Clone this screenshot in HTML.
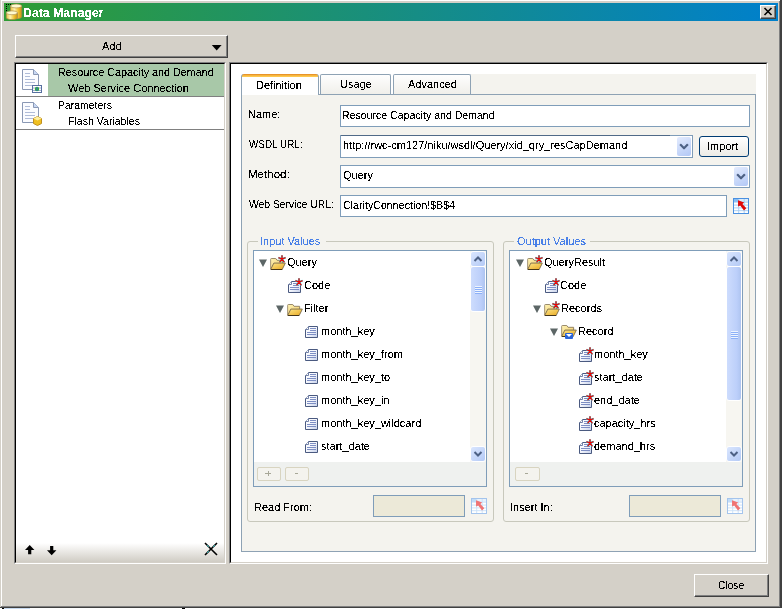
<!DOCTYPE html>
<html><head><meta charset="utf-8">
<style>
*{box-sizing:border-box}
html,body{margin:0;padding:0}
body{width:782px;height:609px;overflow:hidden;background:#d4d0c8;position:relative;font-family:"Liberation Sans",sans-serif;font-size:11px;color:#000}
.a{position:absolute}
.t{position:absolute;white-space:pre;line-height:13px;filter:url(#crisp)}
svg.i{position:absolute;overflow:visible}
.btn3d{position:absolute;background:#d4d0c8;border-top:1px solid #fff;border-left:1px solid #fff;border-right:1px solid #404040;border-bottom:1px solid #404040;box-shadow:inset -1px -1px 0 #808080}
.sunk{position:absolute;border-top:1px solid #808080;border-left:1px solid #808080;border-right:1px solid #fff;border-bottom:1px solid #fff}
.fld{position:absolute;background:#fff;border:1px solid #7f9db9}
.sbtn{position:absolute;width:15px;height:14px;border-radius:3px;border:1px solid #fff;background:linear-gradient(135deg,#dae6fe,#b4caf6)}
</style></head><body>
<svg width="0" height="0" style="position:absolute">
<defs>
<filter id="crisp" x="-5%" y="-5%" width="110%" height="110%"><feComponentTransfer><feFuncA type="discrete" tableValues="0 0 0 0 0 0 0 0 0 1 1 1 1 1 1 1 1 1 1 1"/></feComponentTransfer></filter>
<linearGradient id="gold" x1="0" x2="1" y1="0" y2="0"><stop offset="0" stop-color="#e8c040"/><stop offset="0.35" stop-color="#fff4b0"/><stop offset="0.7" stop-color="#f0c030"/><stop offset="1" stop-color="#c89010"/></linearGradient>
<linearGradient id="fback" x1="0" x2="1" y1="0" y2="1"><stop offset="0" stop-color="#fff4b8"/><stop offset="1" stop-color="#f0c860"/></linearGradient>
<linearGradient id="ffront" x1="0" x2="1" y1="0" y2="1"><stop offset="0" stop-color="#fde68a"/><stop offset="1" stop-color="#e8a820"/></linearGradient>
<linearGradient id="dfill" x1="0" x2="1" y1="0" y2="1"><stop offset="0" stop-color="#ffffff"/><stop offset="0.5" stop-color="#f4f6fc"/><stop offset="1" stop-color="#c4cfea"/></linearGradient>
<symbol id="star" viewBox="0 0 8 8">
 <path d="M4,4V0.3M4,4L0.4,2.6M4,4L7.6,2.6M4,4L1.6,7.4M4,4L6.4,7.4" stroke="#30e4ec" stroke-width="1.9"/>
 <path d="M4,4V0.3M4,4L0.4,2.6M4,4L7.6,2.6M4,4L1.6,7.4M4,4L6.4,7.4" stroke="#f00000" stroke-width="1.3"/>
</symbol>
<symbol id="folder" viewBox="0 0 17 13">
 <path d="M0.5,12 V1.5 Q0.5,0.5 1.5,0.5 H6 L7.5,2.5 H13.5 V6" fill="url(#fback)" stroke="#8c7c5c"/>
 <path d="M0.5,12.5 L4,5.5 H16.5 L13,12.5 Z" fill="url(#ffront)" stroke="#7c6c4c"/>
 <path d="M1,12.5 H13" stroke="#3c2c10"/>
</symbol>
<symbol id="doc" viewBox="0 0 13 12">
 <path d="M3.5,0.5 H12.5 V11.5 H0.5 V3.5 Z" fill="url(#dfill)" stroke="#4a5a80"/>
 <path d="M0.5,3.5 H3.5 V0.5" fill="#fff" stroke="#7080a8"/>
 <path d="M5,2.5H11M5,4.5H11M2,6.5H11M2,8.5H11" stroke="#7d8ec4"/>
</symbol>
<symbol id="tri" viewBox="0 0 8 8">
 <path d="M0,0.5 H8 L4,8 Z" fill="#5c6666"/>
</symbol>
<symbol id="bigdoc" viewBox="0 0 17 21">
 <path d="M0.5,0.5 H11.5 L16.5,5.5 V20.5 H0.5 Z" fill="#fbfcff" stroke="#8a98b4"/>
 <path d="M11.5,0.5 V5.5 H16.5" fill="#c8d8f4" stroke="#8a98b4"/>
 <path d="M3,4.5H8M3,7.5H8M3,10.5H13M3,13.5H13M3,16.5H13" stroke="#b0bcd8"/>
</symbol>
<symbol id="pick" viewBox="0 0 16 16">
 <rect x="0.5" y="0.5" width="15" height="15" fill="#fff" stroke="#4a90e0"/>
 <rect x="1" y="1" width="4.5" height="3" fill="#88bcf4"/>
 <rect x="6" y="1" width="9" height="3" fill="#dcecfc"/>
 <path d="M1,4.2H15M1,7.1H15M1,9.9H15M1,12.7H15M5.7,1V15M11.2,1V15" stroke="#a4ccf4" stroke-width="0.9"/>
 <path d="M5,2.3 L11.2,4.5 L9.4,6 L13.3,10.2 L11,12.4 L7.2,7.6 L5.1,8.6 Z" fill="#e00808"/>
</symbol>
<symbol id="pickd" viewBox="0 0 16 16">
 <rect x="0.5" y="0.5" width="15" height="15" fill="#fff" stroke="#a4c4ec"/>
 <rect x="1" y="1" width="4.5" height="3" fill="#c0dcf8"/>
 <rect x="6" y="1" width="9" height="3" fill="#e8f2fc"/>
 <path d="M1,4.2H15M1,7.1H15M1,9.9H15M1,12.7H15M5.7,1V15M11.2,1V15" stroke="#c8e0f8" stroke-width="0.9"/>
 <path d="M5,2.3 L11.2,4.5 L9.4,6 L13.3,10.2 L11,12.4 L7.2,7.6 L5.1,8.6 Z" fill="#f07474"/>
</symbol>
<symbol id="chev" viewBox="0 0 9 6">
 <path d="M1,1 L4.5,4.5 L8,1" fill="none" stroke="#4d6185" stroke-width="2"/>
</symbol>
<symbol id="chevu" viewBox="0 0 9 6">
 <path d="M1,5 L4.5,1.5 L8,5" fill="none" stroke="#4d6185" stroke-width="2"/>
</symbol>
</defs></svg>

<div class="a" style="left:1px;top:0;width:779px;height:1px;background:#fff"></div>
<div class="a" style="left:1px;top:0;width:1px;height:606px;background:#fff"></div>
<div class="a" style="left:779px;top:1px;width:1px;height:606px;background:#808080"></div>
<div class="a" style="left:780px;top:0;width:2px;height:609px;background:#404040"></div>
<div class="a" style="left:1px;top:606px;width:779px;height:1px;background:#808080"></div>
<div class="a" style="left:0;top:607px;width:782px;height:1px;background:#404040"></div>
<div class="a" style="left:0;top:608px;width:782px;height:1px;background:#fff"></div>
<div class="a" style="left:2px;top:608px;width:2px;height:1px;background:#000"></div>
<div class="a" style="left:4px;top:608px;width:26px;height:1px;background:#c8daf0"></div>
<div class="a" style="left:182px;top:608px;width:3px;height:1px;background:#000"></div>

<div class="a" style="left:4px;top:3px;width:774px;height:18px;background:linear-gradient(to right,#2f9c34,#0080cc)"></div>
<svg class="i" style="left:0;top:0" width="23" height="23" viewBox="0 0 23 23">
 <rect x="6" y="4" width="1" height="1" fill="#000"/><rect x="8" y="4" width="1" height="1" fill="#000"/><rect x="10" y="4" width="1" height="1" fill="#000"/>
 <rect x="6" y="6" width="1" height="1" fill="#000"/><rect x="6" y="8" width="1" height="1" fill="#000"/><rect x="6" y="10" width="1" height="1" fill="#000"/>
 <path d="M10.5,6 V16.8 A5.6,1.9 0 0 0 21.7,16.8 V6" fill="url(#gold)" stroke="#a88848" stroke-width="0.7"/>
 <ellipse cx="16.1" cy="6" rx="5.6" ry="1.9" fill="#fffad0" stroke="#b09050" stroke-width="0.7"/>
 <path d="M6.3,12.8 V17.7 A5.6,1.9 0 0 0 17.5,17.7 V12.8" fill="url(#gold)" stroke="#a88848" stroke-width="0.7"/>
 <ellipse cx="11.9" cy="12.8" rx="5.6" ry="1.9" fill="#fffad0" stroke="#b09050" stroke-width="0.7"/>
</svg>
<div class="t" style="left:23px;top:6px;color:#fff;font-weight:bold;font-size:12px;line-height:14px;transform:scaleX(1.025);transform-origin:0 0">Data Manager</div>
<div class="btn3d" style="left:760px;top:5px;width:16px;height:14px"></div>
<svg class="i" style="left:764px;top:8px" width="8" height="7" viewBox="0 0 8 7"><path d="M0.5,0 L7.5,7 M7.5,0 L0.5,7" stroke="#000" stroke-width="1.6"/></svg>

<div class="btn3d" style="left:15px;top:35px;width:213px;height:23px"></div>
<div class="t" style="left:102px;top:40px">Add</div>
<svg class="i" style="left:212px;top:45px" width="10" height="6" viewBox="0 0 10 6"><path d="M-0.2,0H9.6L4.7,5.4Z" fill="#000"/></svg>

<div class="sunk" style="left:14px;top:62px;width:212px;height:502px"></div>
<div class="a" style="left:15px;top:63px;width:210px;height:500px;background:#fff;border-top:1px solid #000;border-left:1px solid #000;border-right:1px solid #d4d0c8;border-bottom:1px solid #d4d0c8"></div>
<div class="a" style="left:16px;top:543px;width:208px;height:19px;background:linear-gradient(#fff,#d0ccc4)"></div>
<div class="a" style="left:48px;top:64px;width:176px;height:32px;background:#a8c8a8"></div>
<div class="a" style="left:16px;top:96px;width:208px;height:1px;background:#808080"></div>
<div class="a" style="left:16px;top:129px;width:208px;height:1px;background:#808080"></div>
<svg class="i" style="left:22px;top:69px" width="17" height="21"><use href="#bigdoc"/></svg>
<svg class="i" style="left:32px;top:85px" width="10" height="8" viewBox="0 0 10 8"><rect x="0.5" y="0.5" width="9" height="7" fill="#fff" stroke="#5870a0"/><path d="M1,3H9M1,5.5H9" stroke="#a0b0d0"/><circle cx="5" cy="4" r="2.2" fill="#30b030"/><path d="M5,2V6" stroke="#3060e0"/></svg>
<svg class="i" style="left:22px;top:102px" width="17" height="21"><use href="#bigdoc"/></svg>
<svg class="i" style="left:33px;top:116px" width="9" height="10" viewBox="0 0 9 10"><path d="M4.5,0.5 L8.5,2.5 V7.5 L4.5,9.5 L0.5,7.5 V2.5 Z" fill="#f0c020" stroke="#c09020"/><path d="M0.5,2.5 L4.5,4.5 L8.5,2.5 L4.5,0.5Z" fill="#fff0a0"/></svg>
<div class="t" style="left:58px;top:66px;transform:scaleX(0.98);transform-origin:0 0">Resource Capacity and Demand</div>
<div class="t" style="left:68px;top:82px">Web Service Connection</div>
<div class="t" style="left:58px;top:99px;transform:scaleX(0.95);transform-origin:0 0">Parameters</div>
<div class="t" style="left:68px;top:115px;transform:scaleX(0.96);transform-origin:0 0">Flash Variables</div>
<svg class="i" style="left:25px;top:545px" width="10" height="10" viewBox="0 0 10 10"><path d="M4.7,0 L9.4,5 H6.3 V9.3 H3.1 V5 H0 Z" fill="#000"/></svg>
<svg class="i" style="left:47px;top:546px" width="10" height="10" viewBox="0 0 10 10"><path d="M4.7,9.3 L9.4,4.3 H6.3 V0 H3.1 V4.3 H0 Z" fill="#000"/></svg>
<svg class="i" style="left:204px;top:542px" width="14" height="14" viewBox="0 0 14 14"><path d="M1,1 L13,13 M13,1 L1,13" stroke="#000" stroke-width="1.6"/><path d="M3,3L5,5M11,3L9,5M3,11L5,9" stroke="#20a0a0" stroke-width="1"/></svg>

<div class="sunk" style="left:229px;top:62px;width:539px;height:502px"></div>
<div class="a" style="left:230px;top:63px;width:537px;height:500px;background:#fff;border-top:1px solid #000;border-left:1px solid #000;border-right:1px solid #d4d0c8;border-bottom:1px solid #d4d0c8"></div>

<div class="a" style="left:471px;top:74px;width:285px;height:20px;background:#f4f3ee"></div>
<div class="a" style="left:241px;top:94px;width:515px;height:458px;background:#f4f3ee;border:1px solid #8ea2b4"></div>
<div class="a" style="left:241px;top:74px;width:78px;height:21px;background:linear-gradient(#e8942a 0 1px,#f6b63e 1px 2px,#fdc850 2px 3px,#fff 3px);border-left:1px solid #8ea2b4;border-right:1px solid #8ea2b4;border-radius:3px 3px 0 0"></div>
<div class="a" style="left:320px;top:74px;width:71px;height:20px;background:linear-gradient(#fefefe,#f0efea);border:1px solid #8ea2b4;border-bottom:none;border-radius:2px 2px 0 0"></div>
<div class="a" style="left:393px;top:74px;width:78px;height:20px;background:linear-gradient(#fefefe,#f0efea);border:1px solid #8ea2b4;border-bottom:none;border-radius:2px 2px 0 0"></div>
<div class="t" style="left:256px;top:79px">Definition</div>
<div class="t" style="left:340px;top:78px">Usage</div>
<div class="t" style="left:408px;top:78px">Advanced</div>

<div class="t" style="left:248px;top:108px">Name:</div>
<div class="t" style="left:249px;top:138px;transform:scaleX(0.9);transform-origin:0 0">WSDL URL:</div>
<div class="t" style="left:248px;top:168px;transform:scaleX(1.05);transform-origin:0 0">Method:</div>
<div class="t" style="left:249px;top:198px;transform:scaleX(0.94);transform-origin:0 0">Web Service URL:</div>
<div class="fld" style="left:340px;top:105px;width:410px;height:22px"></div>
<div class="t" style="left:342px;top:109px;transform:scaleX(0.96);transform-origin:0 0">Resource Capacity and Demand</div>
<div class="fld" style="left:340px;top:135px;width:353px;height:23px"></div>
<div class="t" style="left:343px;top:139px">http://rwc-cm127/niku/wsdl/Query/xid_qry_resCapDemand</div>
<div class="sbtn" style="left:677px;top:137px;width:14px;height:19px;border:none;border-radius:2px;background:linear-gradient(150deg,#e4ecfe,#b2c8f6)"></div>
<svg class="i" style="left:679px;top:143px" width="10" height="7" viewBox="0 0 9 6"><use href="#chev"/></svg>
<div class="a" style="left:341px;top:135px;width:329px;height:1px;background:#506a88"></div>
<div class="a" style="left:699px;top:136px;width:50px;height:21px;background:linear-gradient(#fff,#ecebe6);border:1px solid #003c74;border-radius:3px"></div>
<div class="t" style="left:707px;top:140px">Import</div>
<div class="fld" style="left:340px;top:165px;width:410px;height:23px"></div>
<div class="t" style="left:343px;top:169px">Query</div>
<div class="sbtn" style="left:734px;top:167px;width:14px;height:19px;border:none;border-radius:2px;background:linear-gradient(150deg,#e4ecfe,#b2c8f6)"></div>
<svg class="i" style="left:736px;top:173px" width="10" height="7" viewBox="0 0 9 6"><use href="#chev"/></svg>
<div class="fld" style="left:340px;top:195px;width:387px;height:22px"></div>
<div class="t" style="left:343px;top:199px;transform:scaleX(0.97);transform-origin:0 0">ClarityConnection!$B$4</div>
<svg class="i" style="left:733px;top:198px" width="16" height="16"><use href="#pick"/></svg>

<div class="a" style="left:247px;top:241px;width:247px;height:281px;border:1px solid #c8c8bc;border-radius:3px"></div>
<div class="a" style="left:258px;top:234px;width:68px;height:14px;background:#f4f3ee"></div>
<div class="t" style="left:260px;top:235px;color:#4a80e8">Input Values</div>
<div class="fld" style="left:253px;top:250px;width:234px;height:237px;background:#eff1ef"></div>
<div class="a" style="left:254px;top:251px;width:232px;height:211px;background:#fff;overflow:hidden">
<svg class="i" style="left:5px;top:8px" width="8" height="8"><use href="#tri"/></svg>
<svg class="i" style="left:16px;top:7px" width="16" height="12" viewBox="0 0 17 13"><use href="#folder"/></svg>
<svg class="i" style="left:24px;top:4px" width="8" height="8"><use href="#star"/></svg>
<div class="t" style="left:33px;top:5px">Query</div>
<svg class="i" style="left:34px;top:30px" width="13" height="12"><use href="#doc"/></svg>
<svg class="i" style="left:41px;top:27px" width="8" height="8"><use href="#star"/></svg>
<div class="t" style="left:50px;top:28px">Code</div>
<svg class="i" style="left:22px;top:54px" width="8" height="8"><use href="#tri"/></svg>
<svg class="i" style="left:33px;top:53px" width="16" height="12" viewBox="0 0 17 13"><use href="#folder"/></svg>
<div class="t" style="left:50px;top:51px">Filter</div>
<svg class="i" style="left:51px;top:75px" width="13" height="12"><use href="#doc"/></svg>
<div class="t" style="left:67px;top:74px">month_key</div>
<svg class="i" style="left:51px;top:98px" width="13" height="12"><use href="#doc"/></svg>
<div class="t" style="left:67px;top:97px">month_key_from</div>
<svg class="i" style="left:51px;top:121px" width="13" height="12"><use href="#doc"/></svg>
<div class="t" style="left:67px;top:120px">month_key_to</div>
<svg class="i" style="left:51px;top:144px" width="13" height="12"><use href="#doc"/></svg>
<div class="t" style="left:67px;top:143px">month_key_in</div>
<svg class="i" style="left:51px;top:167px" width="13" height="12"><use href="#doc"/></svg>
<div class="t" style="left:67px;top:166px">month_key_wildcard</div>
<svg class="i" style="left:51px;top:190px" width="13" height="12"><use href="#doc"/></svg>
<div class="t" style="left:67px;top:189px">start_date</div>
</div>
<div class="a" style="left:470px;top:251px;width:16px;height:211px;background:#f7f6f1"></div>
<div class="sbtn" style="left:470px;top:251px;width:16px;height:16px"></div>
<svg class="i" style="left:473px;top:256px" width="10" height="6" viewBox="0 0 9 6"><use href="#chevu"/></svg>
<div class="sbtn" style="left:470px;top:266px;width:16px;height:46px;background:linear-gradient(to right,#cddcfd,#bccffa 70%,#aec4f0)"></div>
<div class="a" style="left:475px;top:286px;width:7px;height:8px;background:repeating-linear-gradient(#eef4fe 0 1px,#8cb0f8 1px 2px)"></div>
<div class="sbtn" style="left:470px;top:446px;width:16px;height:16px"></div>
<svg class="i" style="left:473px;top:451px" width="10" height="6" viewBox="0 0 9 6"><use href="#chev"/></svg>

<div class="a" style="left:257px;top:467px;width:24px;height:14px;border:1px solid #d8d4c0;border-radius:2px;background:#f4f3ee"></div>
<div class="t" style="left:265px;top:467px;color:#a8a898">+</div>
<div class="a" style="left:285px;top:467px;width:24px;height:14px;border:1px solid #d8d4c0;border-radius:2px;background:#f4f3ee"></div>
<div class="t" style="left:295px;top:466px;color:#a8a898">-</div>

<div class="a" style="left:503px;top:241px;width:247px;height:281px;border:1px solid #c8c8bc;border-radius:3px"></div>
<div class="a" style="left:514px;top:234px;width:76px;height:14px;background:#f4f3ee"></div>
<div class="t" style="left:517px;top:235px;color:#4a80e8">Output Values</div>
<div class="fld" style="left:509px;top:250px;width:234px;height:237px;background:#eff1ef"></div>
<div class="a" style="left:510px;top:251px;width:232px;height:211px;background:#fff;overflow:hidden">
<svg class="i" style="left:6px;top:8px" width="8" height="8"><use href="#tri"/></svg>
<svg class="i" style="left:17px;top:7px" width="16" height="12" viewBox="0 0 17 13"><use href="#folder"/></svg>
<svg class="i" style="left:25px;top:4px" width="8" height="8"><use href="#star"/></svg>
<div class="t" style="left:34px;top:5px">QueryResult</div>
<svg class="i" style="left:35px;top:30px" width="13" height="12"><use href="#doc"/></svg>
<svg class="i" style="left:42px;top:27px" width="8" height="8"><use href="#star"/></svg>
<div class="t" style="left:50px;top:28px">Code</div>
<svg class="i" style="left:23px;top:54px" width="8" height="8"><use href="#tri"/></svg>
<svg class="i" style="left:34px;top:53px" width="16" height="12" viewBox="0 0 17 13"><use href="#folder"/></svg>
<svg class="i" style="left:42px;top:50px" width="8" height="8"><use href="#star"/></svg>
<div class="t" style="left:51px;top:51px">Records</div>
<svg class="i" style="left:40px;top:77px" width="8" height="8"><use href="#tri"/></svg>
<svg class="i" style="left:51px;top:74px" width="16" height="12" viewBox="0 0 17 13"><use href="#folder"/></svg>
<div class="a" style="left:55px;top:82px;width:8px;height:6px;background:#2a64d8;border-radius:1px"></div>
<svg class="i" style="left:56px;top:83px" width="6" height="4" viewBox="0 0 6 4"><path d="M0,0H6L3,3Z" fill="#fff"/></svg>
<div class="t" style="left:68px;top:74px">Record</div>
<svg class="i" style="left:69px;top:99px" width="13" height="12"><use href="#doc"/></svg>
<svg class="i" style="left:76px;top:96px" width="8" height="8"><use href="#star"/></svg>
<div class="t" style="left:84px;top:97px">month_key</div>
<svg class="i" style="left:69px;top:122px" width="13" height="12"><use href="#doc"/></svg>
<svg class="i" style="left:76px;top:119px" width="8" height="8"><use href="#star"/></svg>
<div class="t" style="left:84px;top:120px">start_date</div>
<svg class="i" style="left:69px;top:145px" width="13" height="12"><use href="#doc"/></svg>
<svg class="i" style="left:76px;top:142px" width="8" height="8"><use href="#star"/></svg>
<div class="t" style="left:84px;top:143px">end_date</div>
<svg class="i" style="left:69px;top:168px" width="13" height="12"><use href="#doc"/></svg>
<svg class="i" style="left:76px;top:165px" width="8" height="8"><use href="#star"/></svg>
<div class="t" style="left:84px;top:166px">capacity_hrs</div>
<svg class="i" style="left:69px;top:191px" width="13" height="12"><use href="#doc"/></svg>
<svg class="i" style="left:76px;top:188px" width="8" height="8"><use href="#star"/></svg>
<div class="t" style="left:84px;top:189px">demand_hrs</div>
</div>
<div class="a" style="left:726px;top:251px;width:16px;height:211px;background:#f7f6f1"></div>
<div class="sbtn" style="left:726px;top:251px;width:16px;height:16px"></div>
<svg class="i" style="left:729px;top:256px" width="10" height="6" viewBox="0 0 9 6"><use href="#chevu"/></svg>
<div class="sbtn" style="left:726px;top:266px;width:16px;height:135px;background:linear-gradient(to right,#cddcfd,#bccffa 70%,#aec4f0)"></div>
<div class="a" style="left:731px;top:331px;width:7px;height:8px;background:repeating-linear-gradient(#eef4fe 0 1px,#8cb0f8 1px 2px)"></div>
<div class="sbtn" style="left:726px;top:446px;width:16px;height:16px"></div>
<svg class="i" style="left:729px;top:451px" width="10" height="6" viewBox="0 0 9 6"><use href="#chev"/></svg>

<div class="a" style="left:515px;top:467px;width:25px;height:14px;border:1px solid #d8d4c0;border-radius:2px;background:#f4f3ee"></div>
<div class="t" style="left:525px;top:466px;color:#a8a898">-</div>

<div class="t" style="left:254px;top:501px">Read From:</div>
<div class="fld" style="left:373px;top:495px;width:92px;height:22px;background:#ece9d8"></div>
<svg class="i" style="left:471px;top:498px" width="16" height="16"><use href="#pickd"/></svg>
<div class="t" style="left:510px;top:501px">Insert In:</div>
<div class="fld" style="left:629px;top:495px;width:92px;height:22px;background:#ece9d8"></div>
<svg class="i" style="left:727px;top:498px" width="16" height="16"><use href="#pickd"/></svg>

<div class="btn3d" style="left:694px;top:574px;width:75px;height:23px"></div>
<div class="t" style="left:718px;top:579px;transform:scaleX(0.93);transform-origin:0 0">Close</div>
</body></html>
